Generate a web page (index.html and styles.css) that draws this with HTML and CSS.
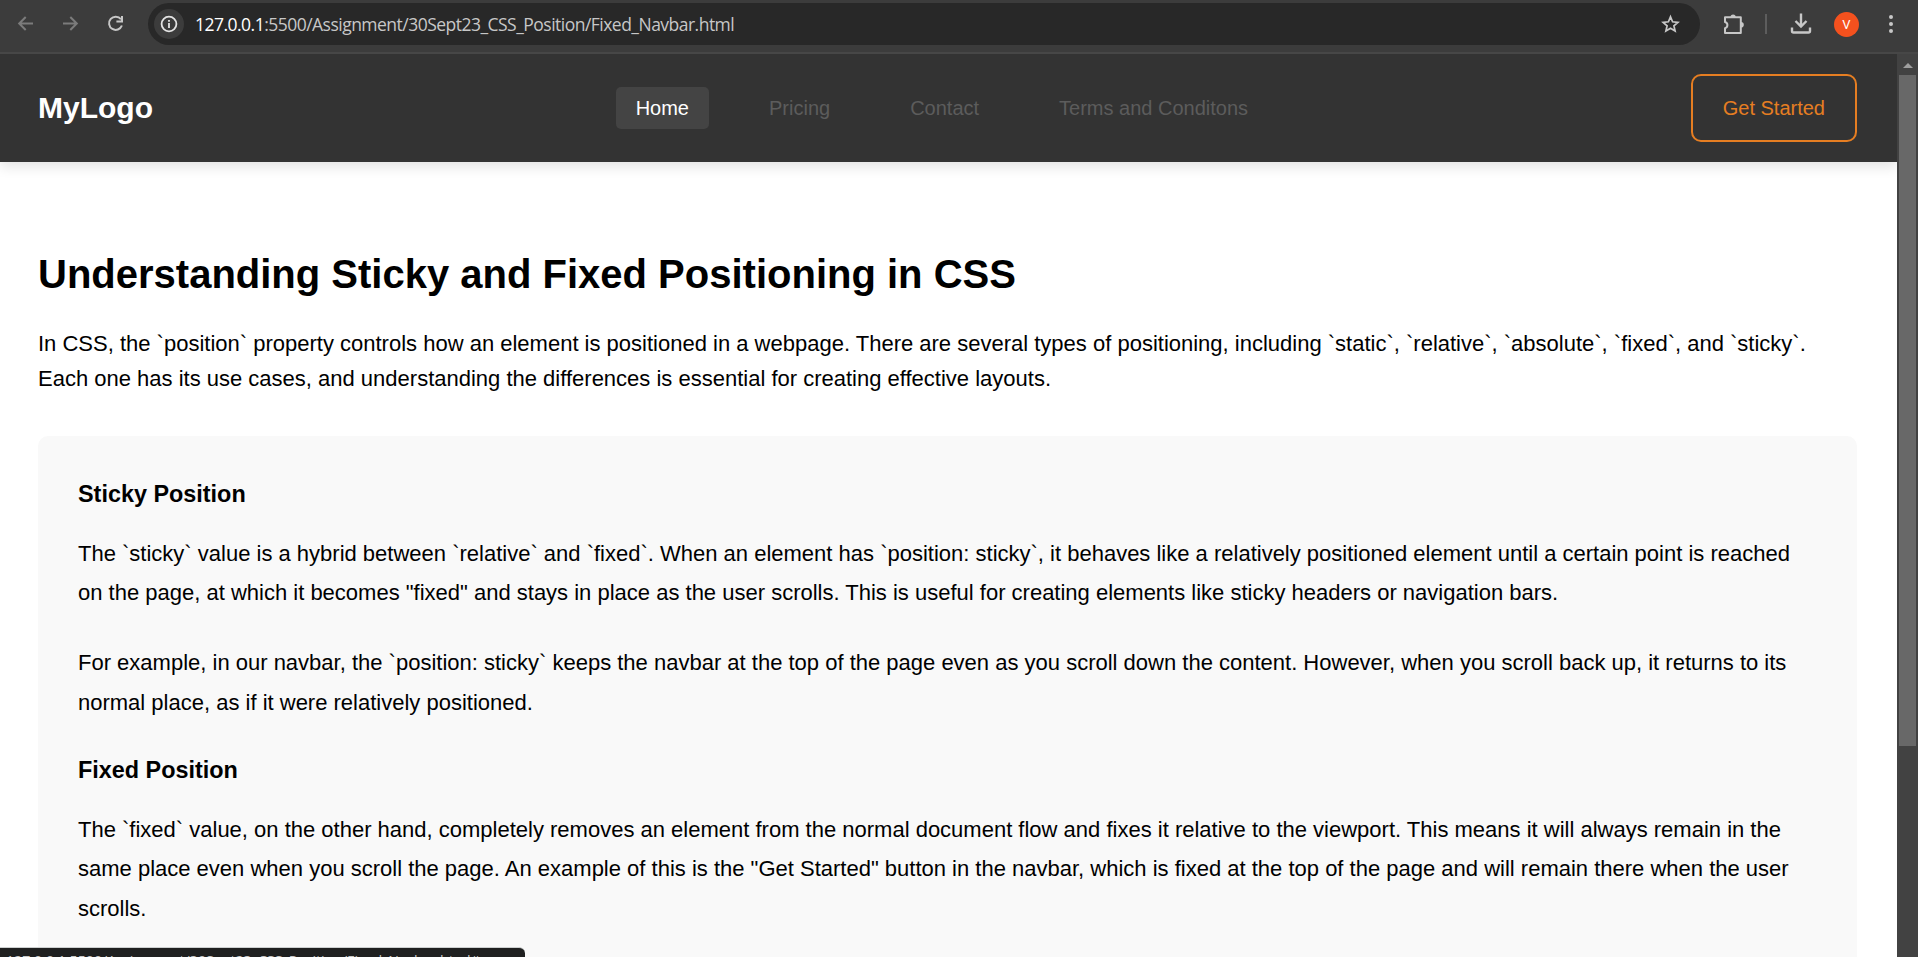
FILE: index.html
```html
<!DOCTYPE html>
<html lang="en">
<head>
<meta charset="utf-8">
<title>Fixed Navbar</title>
<link rel="stylesheet" href="styles.css">
</head>
<body>
<div class="browser">
  <header class="toolbar">
    <div class="nav-buttons">
      <svg class="dim" width="18" height="18" viewBox="0 0 18 18"><path d="M16 8.500H2.500M8.700 2L2.200 8.500l6.500 6.500"/></svg>
      <svg class="dim" width="18" height="18" viewBox="0 0 18 18"><path d="M1 8.500H14.500M8.300 2l6.500 6.500-6.500 6.500"/></svg>
      <svg width="18" height="18" viewBox="0 0 18 18"><path d="M13.900 4.200A6.600 6.600 0 1 0 14.900 10.500M15 1v5.600H9.400"/></svg>
    </div>
    <div class="address">
      <span class="site-info"><svg width="18" height="18" viewBox="0 0 18 18"><circle cx="9" cy="9" r="7.4"/><path d="M9 8v5M9 5v1.8"/></svg></span>
      <span class="url"><b>127.0.0.1</b>:5500/Assignment/30Sept23_CSS_Position/Fixed_Navbar.html</span>
      <svg class="star" width="20" height="20" viewBox="0 0 20 20"><path d="M10.500 2.800l2.100 5 5.300.5-4 3.500 1.200 5.200-4.600-2.800L5.900 17l1.200-5.200-4-3.500 5.300-.5z"/></svg>
    </div>
    <div class="actions">
      <svg width="22" height="22" viewBox="0 0 22 22"><path stroke-linejoin="round" d="M2 4.200H17.800V20H2V15.200A3.200 3.200 0 0 0 2 9z"/><path class="solid" d="M7.500 4a2.600 2.600 0 0 1 5.200 0zM18 9a2.800 2.800 0 0 1 0 5.600z"/></svg>
      <i class="divider"></i>
      <svg class="download" width="22" height="22" viewBox="0 0 22 22"><path d="M11 .5v13M5.500 8L11 13.500 16.500 8M2 14.500v3.500q0 1.500 1.500 1.500h15q1.500 0 1.500-1.500v-3.500"/></svg>
      <span class="avatar">V</span>
      <svg class="menu" width="6" height="20" viewBox="0 0 6 20"><circle cx="3" cy="3" r="2"/><circle cx="3" cy="10" r="2"/><circle cx="3" cy="17" r="2"/></svg>
    </div>
  </header>
  <div class="viewport">
    <div class="page">
      <nav class="navbar">
        <div class="logo">MyLogo</div>
        <div class="links">
          <a class="link active">Home</a>
          <a class="link">Pricing</a>
          <a class="link">Contact</a>
          <a class="link">Terms and Conditons</a>
        </div>
        <a class="cta">Get Started</a>
      </nav>
      <main class="content">
        <h1>Understanding Sticky and Fixed Positioning in CSS</h1>
        <p class="intro">In CSS, the `position` property controls how an element is positioned in a webpage. There are several types of positioning, including `static`, `relative`, `absolute`, `fixed`, and `sticky`.<br>Each one has its use cases, and understanding the differences is essential for creating effective layouts.</p>
        <section class="card">
          <h3>Sticky Position</h3>
          <p>The `sticky` value is a hybrid between `relative` and `fixed`. When an element has `position: sticky`, it behaves like a relatively positioned element until a certain point is reached<br>on the page, at which it becomes "fixed" and stays in place as the user scrolls. This is useful for creating elements like sticky headers or navigation bars.</p>
          <p>For example, in our navbar, the `position: sticky` keeps the navbar at the top of the page even as you scroll down the content. However, when you scroll back up, it returns to its<br>normal place, as if it were relatively positioned.</p>
          <h3>Fixed Position</h3>
          <p>The `fixed` value, on the other hand, completely removes an element from the normal document flow and fixes it relative to the viewport. This means it will always remain in the<br>same place even when you scroll the page. An example of this is the "Get Started" button in the navbar, which is fixed at the top of the page and will remain there when the user<br>scrolls.</p>
        </section>
      </main>
    </div>
    <div class="scrollbar"><i class="arrow"></i><i class="thumb"></i></div>
  </div>
  <div class="status">127.0.0.1:5500/Assignment/30Sept23_CSS_Position/Fixed_Navbar.html#</div>
</div>
</body>
</html>
```
FILE: styles.css
```css
* { box-sizing: border-box; }
body { margin: 0; font-family: Arial, "Liberation Sans", sans-serif; color: #000; }
.browser { position: relative; display: flex; flex-direction: column; height: 957px; overflow: hidden; }

.toolbar { display: flex; align-items: flex-start; flex: none; height: 54px; padding-top: 3px; background: #3c3c3c; border-bottom: 2px solid #474747; }
.toolbar svg { flex: none; fill: none; stroke: #c7c7c7; stroke-width: 2; }
.toolbar svg.dim { stroke: #7b7b7b; }
.nav-buttons { display: flex; gap: 27px; width: 148px; padding: 12px 0 0 17px; }
.address { display: flex; align-items: center; width: 1552px; height: 42px; padding: 0 20px 0 6px; border-radius: 21px; background: #282828; }
.site-info { display: grid; place-items: center; width: 30px; height: 30px; border-radius: 50%; background: #3c3c3c; }
.toolbar .site-info svg { stroke: #e3e3e3; stroke-width: 1.8; }
.url { flex: 1; margin-left: 11px; font: 17.5px "Open Sans", sans-serif; letter-spacing: -0.52px; color: #c7c7c7; white-space: nowrap; }
.url b { font-weight: 400; color: #fff; }
.toolbar .star { stroke-width: 1.700; }
.actions { display: flex; align-items: center; height: 42px; padding-left: 23px; }
.toolbar .solid { fill: #c7c7c7; stroke: none; }
.divider { width: 2px; height: 20px; margin: 0 23px 0 20px; background: #5d5d5d; }
.toolbar .download { stroke-width: 2.400; }
.avatar { display: grid; place-items: center; width: 25px; height: 25px; margin: 0 29px 0 22px; border-radius: 50%; background: #f4511e; color: #fff; font: 13px Roboto, sans-serif; }
.toolbar .menu { fill: #c7c7c7; stroke: none; }

.viewport { display: flex; flex: 1; min-height: 0; }
.page { flex: 1; min-width: 0; overflow: hidden; background: #fff; }
.navbar { display: flex; align-items: center; justify-content: space-between; height: 108px; padding: 0 40px 0 38px; background: #333; box-shadow: 0 5px 12px rgba(0, 0, 0, 0.11); }
.logo { font-size: 30px; font-weight: 700; color: #fff; }
.links { display: flex; gap: 40px; padding-left: 40px; font-size: 20px; }
.link { padding: 10px 20px; border-radius: 5px; line-height: 22px; color: #5c5c5c; }
.active { background: #444; color: #fff; }
.cta { padding: 21px 30px; border: 2px solid #e67e22; border-radius: 10px; font-size: 20px; line-height: 22px; color: #e67e22; }

.content { padding: 80px 40px 0 38px; white-space: nowrap; }
h1 { margin: 0 0 20px; font-size: 40px; line-height: 64px; }
.intro { margin: 0 0 40px; font-size: 22px; line-height: 35.2px; }
.card { height: 700px; padding: 40px; border-radius: 10px; background: #f9f9f9; }
.card h3 { margin: 0 0 20px; font-size: 23.400px; line-height: 37.400px; }
.card p { margin: 0 0 30px; font-size: 22px; line-height: 39.600px; }

.scrollbar { display: flex; flex-direction: column; align-items: center; width: 21px; padding: 9px 2px 0 2px; background: #424242; }
.arrow { border: 5px solid transparent; border-top: 0; border-bottom-color: #9f9f9f; }
.thumb { width: 17px; height: 671px; margin-top: 7px; background: #686868; }

.status { position: absolute; left: 0; bottom: 0; width: 525px; height: 10px; padding: 3px 0 0 6px; overflow: hidden; border-top: 1px solid #cdd0d0; border-radius: 0 6px 0 0; background: #1f2020; color: #c7c7c7; font: 14.2px/20px "Open Sans", sans-serif; white-space: nowrap; }
```
